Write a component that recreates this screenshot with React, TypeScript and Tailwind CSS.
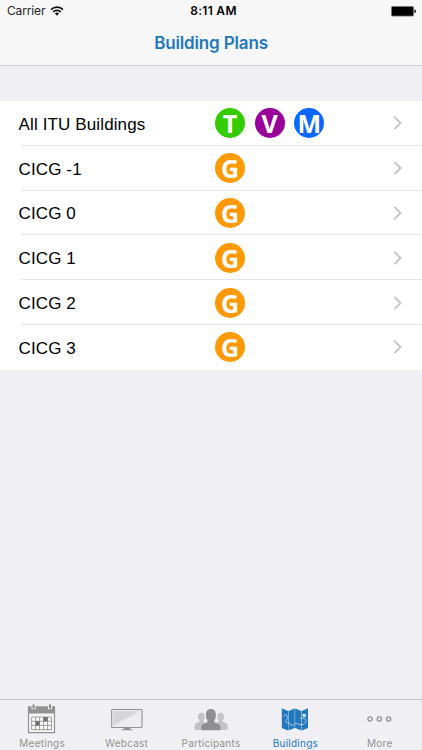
import { Fragment } from "react"
import type { ReactNode } from "react"
import clsx from "clsx"

type BadgeLetter = "T" | "V" | "M" | "G"

type Building = {
  name: string
  badges: BadgeLetter[]
}

type Tab = {
  label: string
  icon: ReactNode
  active?: boolean
}

const badgeColors: Record<BadgeLetter, string> = {
  T: "bg-[#33cc00]",
  V: "bg-[#990099]",
  M: "bg-[#0a66ff]",
  G: "bg-[#ff9a05]",
}

const buildings: Building[] = [
  { name: "All ITU Buildings", badges: ["T", "V", "M"] },
  { name: "CICG -1", badges: ["G"] },
  { name: "CICG 0", badges: ["G"] },
  { name: "CICG 1", badges: ["G"] },
  { name: "CICG 2", badges: ["G"] },
  { name: "CICG 3", badges: ["G"] },
]

function WifiIcon() {
  return (
    <svg className="ml-[5px] h-[10px] w-[14px]" viewBox="0 0 14 10" fill="none" stroke="#111" strokeWidth="1.6">
      <path d="M1 3.6a8.6 8.6 0 0 1 12 0" />
      <path d="M3.2 5.9a5.4 5.4 0 0 1 7.6 0" />
      <path d="M7 9.7 4.9 7.6a3 3 0 0 1 4.2 0z" fill="#111" stroke="none" />
    </svg>
  )
}

function BatteryIcon() {
  return (
    <svg className="h-[11px] w-[26px]" viewBox="0 0 26 11">
      <rect x="0.5" y="0.5" width="22" height="9.6" rx="1" fill="#000" stroke="#777" strokeWidth="0.8" />
      <path d="M23.3 3.6h.8c.7.5.9 1 .9 1.7s-.2 1.2-.9 1.7h-.8z" fill="#222" />
    </svg>
  )
}

function CalendarIcon() {
  return (
    <svg className="h-[30px] w-[30px]" viewBox="0 0 30 30">
      <path d="M1.5 3h26v25.7h-26z" fill="#f4f4f6" stroke="#929292" strokeWidth="1.2" />
      <path d="M1 2.5h27v7H1z" fill="#929292" />
      <path d="M4.5 0h4v5.3h-4zM21 0h4v5.3h-4z" fill="#f0f0f4" />
      <path d="M5.5.5h2v4h-2zM22 .5h2v4h-2z" fill="#858585" />
      <path d="M4.7 13.1h19.8v12.5H4.700z" fill="#fff" />
      <path
        d="M4.7 13.1h19.8v12.5H4.700zM4.700 17.200h19.800M4.700 21.400h19.800M8.600 13.100v12.500M12.600 13.100v12.500M16.600 13.100v12.500M20.600 13.100v12.500"
        fill="none"
        stroke="#929292"
        strokeWidth="0.9"
      />
      <path d="M16.600 13.100h4v4.100h-4zM8.600 17.200h4v4.200h-4z" fill="#6e6e6e" />
    </svg>
  )
}

function ScreenIcon() {
  return (
    <svg className="h-[30px] w-[32px]" viewBox="0 0 32 30">
      <rect x="0.7" y="5.5" width="30.3" height="18" rx="0.8" fill="#ededf1" stroke="#929292" strokeWidth="1.1" />
      <path d="M2.500 7.200h26.500L2.500 21.500z" fill="#d6d6da" />
      <path d="M13 24h6v1.200h2.500v1H10.500v-1H13z" fill="#929292" />
    </svg>
  )
}

function PeopleIcon() {
  return (
    <svg className="h-[30px] w-[34px]" viewBox="0 0 34 30">
      <g fill="#c3c3c6">
        <path d="M.5 26v-4.500c0-1.500 1-2.100 2.700-2.700 1.600-.6 2.400-.9 2.300-2-1.300-1.200-1.400-2.500-1.400-4.300 0-2.400 1.200-3.700 3.300-3.700s3.400 1.300 3.400 3.700c0 1.800-.2 3.100-1.400 4.300 0 1.100.8 1.400 2.300 2L14 26z" />
        <path d="M33.500 26v-4.500c0-1.500-1-2.100-2.700-2.700-1.600-.6-2.400-.9-2.300-2 1.300-1.200 1.400-2.500 1.400-4.300 0-2.400-1.200-3.700-3.300-3.700s-3.400 1.300-3.400 3.700c0 1.800.2 3.100 1.400 4.300 0 1.100-.8 1.400-2.300 2L20 26z" />
      </g>
      <path
        d="M7.300 26.200v-3.400c0-1.900 1.300-2.700 3.300-3.400 2-.7 3-.9 3-2.600-1.300-1.400-1.700-3.400-1.700-6.200 0-3.600 1.900-5.700 5-5.700s5 2.100 5 5.700c0 2.800-.4 4.800-1.700 6.200 0 1.700 1 1.900 3 2.600s3.300 1.500 3.300 3.400v3.400z"
        fill="#8f8f91"
      />
    </svg>
  )
}

function MapIcon() {
  return (
    <svg className="h-[30px] w-[28px]" viewBox="0 0 28 30">
      <g fill="#2278bd">
        <path d="M.8 4.300 7 6.900v19.700L.8 24z" />
        <path d="m7.400 6.900 6.300-2.500V24l-6.300 2.600z" />
        <path d="m14.100 4.400 6.300 2.500v19.700L14.100 24z" />
        <path d="m20.800 6.900 6.200-2.600V24l-6.200 2.600z" />
      </g>
      <g fill="none" stroke="#e4edf5">
        <path
          d="M2.200 12.500c1.500-2.300 3.500-1.800 4.300-.3 1 2-.8 2.900-1.500 4.300-.7 2 1.300 2.300 2.700 2.300 2.200 0 .8 3 3.500 2.600 2.600-.4 2.600-2.800 4.700-1.800 2 .9 4.700 1.700 6.700.7 2.500-1.200 3.200-4.800.8-5.600-1.600-.5-2.600.3-4.300-.7"
          strokeWidth="0.7"
        />
        <path d="m21.700 10 3 3m0-3-3 3" strokeWidth="1.5" />
      </g>
    </svg>
  )
}

function MoreIcon() {
  return (
    <svg className="h-[30px] w-[26px]" viewBox="0 0 26 30" fill="none" stroke="#929292" strokeWidth="1.3">
      <circle cx="3" cy="15" r="2.1" />
      <circle cx="12.3" cy="15" r="2.1" />
      <circle cx="21.6" cy="15" r="2.1" />
    </svg>
  )
}

const tabs: Tab[] = [
  { label: "Meetings", icon: <CalendarIcon /> },
  { label: "Webcast", icon: <ScreenIcon /> },
  { label: "Participants", icon: <PeopleIcon /> },
  { label: "Buildings", icon: <MapIcon />, active: true },
  { label: "More", icon: <MoreIcon /> },
]

function Badge({ letter }: { letter: BadgeLetter }) {
  return (
    <span
      className={clsx(
        "flex size-[30px] items-center justify-center rounded-full font-['Noto_Sans',sans-serif] text-[25px] leading-none font-bold text-white",
        badgeColors[letter]
      )}
    >
      <span className="mt-px">{letter}</span>
    </span>
  )
}

function BuildingRow({ building }: { building: Building }) {
  return (
    <li className="flex h-[44.8px] items-center">
      <span className="w-[215px] pt-[3px] pl-[18.5px] font-['Liberation_Sans',Arial,sans-serif] text-[17px] leading-5 tracking-[0.13px]">
        {building.name}
      </span>
      <span className="flex flex-1 gap-[9.7px]">
        {building.badges.map((letter) => (
          <Badge key={letter} letter={letter} />
        ))}
      </span>
      <svg className="mr-[19px] h-[14px] w-[10px]" viewBox="0 0 10 14" fill="none" stroke="#c4c4c8" strokeWidth="1.8">
        <path d="m1.500 1 6 6-6 6" />
      </svg>
    </li>
  )
}

export default function App() {
  return (
    <div className="flex h-[750px] w-[422px] flex-col overflow-hidden bg-[#efeff4] font-['Inter',sans-serif] text-black">
      <header className="h-[66px] border-b border-[#cfcfd5] bg-[#f7f7f8]">
        <div className="grid h-[22px] grid-cols-3 items-center pr-[5px] pl-[7px] text-[12px]">
          <span className="flex items-center tracking-[-0.15px] text-[#222]">
            Carrier
            <WifiIcon />
          </span>
          <span className="pl-[3px] text-center font-semibold tracking-[0.3px]">8:11 AM</span>
          <span className="flex justify-end">
            <BatteryIcon />
          </span>
        </div>
        <h1 className="pt-[9px] text-center text-[17px] leading-6 font-semibold tracking-[-0.15px] text-[#2278bd]">
          Building Plans
        </h1>
      </header>

      <main className="flex-1 pt-[35px]">
        <ul className="bg-white">
          {buildings.map((building, index) => (
            <Fragment key={building.name}>
              {index > 0 && <li className="-mt-px ml-[21px] h-px bg-[#e6e6ea]" />}
              <BuildingRow building={building} />
            </Fragment>
          ))}
        </ul>
      </main>

      <nav className="grid h-[51px] grid-cols-5 border-t border-[#c2c2c7] bg-[#f0f0f4]">
        {tabs.map((tab) => (
          <button
            key={tab.label}
            className={clsx(
              "flex flex-col items-center pt-[4px] text-[10px] leading-[14px] tracking-[0.25px]",
              tab.active ? "text-[#2278bd]" : "text-[#929292]"
            )}
          >
            {tab.icon}
            <span className="mt-[2px]">{tab.label}</span>
          </button>
        ))}
      </nav>
    </div>
  )
}
